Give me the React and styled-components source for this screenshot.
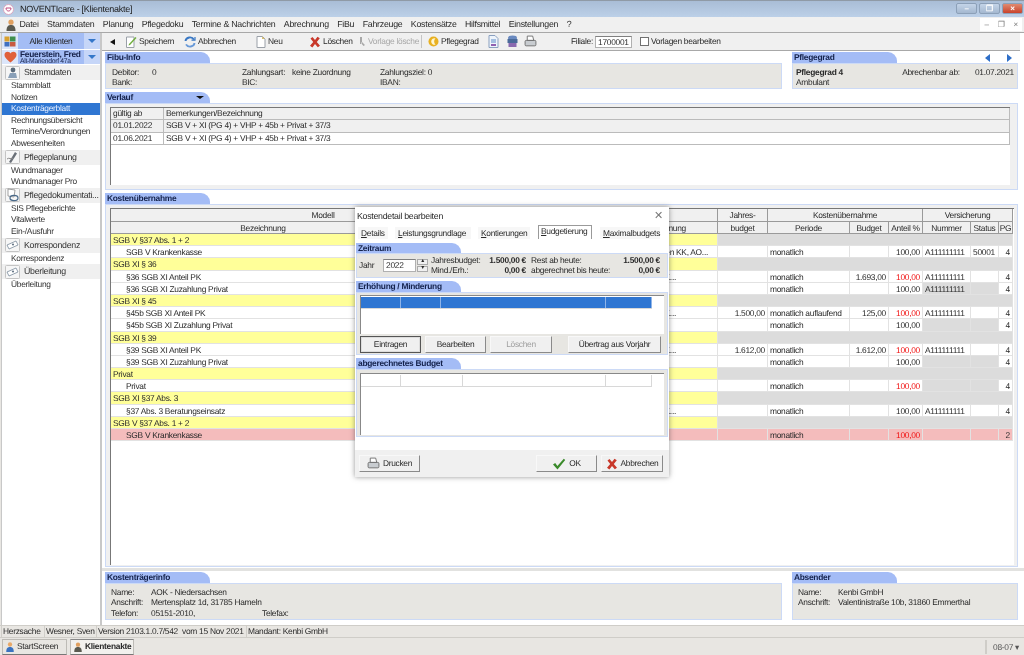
import React from "react";
import styled, { createGlobalStyle } from "styled-components";

const Global = createGlobalStyle`
  html, body { margin: 0; padding: 0; background: #e8e6e2; overflow: hidden; }
  * { box-sizing: border-box; }
`;

const Window = styled.div`
  position: relative;
  width: 1024px;
  height: 655px;
  overflow: hidden;
  display: flex;
  flex-direction: column;
  background: #e8e6e2;
  color: #2a2a2a;
  font-family: "Liberation Sans", Arial, sans-serif;
  font-size: 8.4px;
  letter-spacing: -0.28px;
  line-height: 11px;
  text-rendering: geometricPrecision;
  filter: blur(0.35px);
`;

const TitleBar = styled.div`
  height: 17px;
  flex: none;
  display: flex;
  align-items: center;
  padding-left: 3px;
  gap: 6px;
  border-top: 1px solid #8f9aa6;
  background: linear-gradient(to bottom, #a9bdd6, #bcd0e8);
  font-size: 9px;
  color: #1c1c1c;
`;

const WinButtons = styled.div`
  margin-left: auto;
  display: flex;
  gap: 2px;
  padding-right: 1px;
  align-self: flex-start;
  margin-top: 2px;
`;

const WinButton = styled.div`
  width: 21px;
  height: 11px;
  border: 1px solid #8ca0b8;
  border-radius: 2px;
  background: ${({ $close }) =>
    $close ? "linear-gradient(#e08a70, #c9432c)" : "linear-gradient(#c4d4e8, #a4b8d0)"};
  color: #fff;
  font-size: 8px;
  line-height: 9px;
  text-align: center;
  font-weight: bold;
`;

const MenuBar = styled.div`
  height: 16px;
  flex: none;
  display: flex;
  align-items: center;
  gap: 8.4px;
  padding-left: 5px;
  background: #f0f0f0;
  border-bottom: 1px solid #a8a8a8;
  font-size: 8.8px;
  letter-spacing: -0.25px;
`;

const MenuIcon = styled.div`
  display: flex;
  margin-right: -6px;
`;

const MdiButtons = styled.div`
  margin-left: auto;
  display: flex;
  background: #fff;
  gap: 9px;
  padding: 0 4px;
  height: 13px;
  align-items: center;
  color: #777;
  font-size: 8px;
  margin-right: 2px;
`;

const Body = styled.div`
  flex: 1;
  min-height: 0;
  display: flex;
  padding-left: 1px;
`;

const Sidebar = styled.div`
  width: 99px;
  flex: none;
  background: #fff;
  border-left: 1px solid #c8c8c8;
  display: flex;
  flex-direction: column;
`;

const ClientRow = styled.div`
  height: ${({ $h }) => $h}px;
  flex: none;
  display: flex;
  background: #dce6fa;
  align-items: stretch;
  margin-bottom: 1px;
`;

const ClientIcon = styled.div`
  width: 16px;
  display: flex;
  align-items: center;
  justify-content: center;
`;

const ClientName = styled.div`
  flex: 1;
  background: #a4bdf5;
  display: flex;
  align-items: center;
  justify-content: center;
  color: #222;
`;

const PatientName = styled.div`
  flex: 1;
  min-width: 0;
  background: #a4bdf5;
  padding-left: 2px;
  font-weight: bold;
  font-size: 8.4px;
  line-height: 8.5px;
  color: #16224a;
  white-space: nowrap;
  small {
    display: block;
    font-weight: normal;
    font-size: 6.8px;
    line-height: 6.5px;
  }
`;

const DropArrow = styled.div`
  width: 16px;
  flex: none;
  display: flex;
  align-items: center;
  justify-content: center;
  background: #c6d6f8;
  &::after {
    content: "";
    border-left: 4px solid transparent;
    border-right: 4px solid transparent;
    border-top: 4px solid #3477c9;
  }
`;

const NavHead = styled.div`
  height: 15px;
  flex: none;
  display: flex;
  align-items: center;
  gap: 4px;
  padding-left: 3px;
  background: #f0f0f0;
  font-size: 8.8px;
  color: #333;
  white-space: nowrap;
  svg {
    flex: none;
  }
`;

const NavItem = styled.div`
  height: 11.6px;
  flex: none;
  padding-left: 9px;
  line-height: 11.6px;
  white-space: nowrap;
  background: ${({ $active }) => ($active ? "#2f76d2" : "transparent")};
  color: ${({ $active }) => ($active ? "#e8f0ff" : "#333")};
`;

const Main = styled.div`
  flex: 1;
  min-width: 0;
  display: flex;
  flex-direction: column;
  background: #fff;
  border-left: 2px solid #c8c8c8;
`;

const Toolbar = styled.div`
  height: 18px;
  flex: none;
  display: flex;
  align-items: center;
  background: #f0f0f0;
  border-bottom: 1px solid #a8a8a8;
  padding-left: 8px;
  margin: 0 4px 1px 0;
`;

const ToolItem = styled.div`
  width: ${({ $w }) => $w}px;
  flex: none;
  display: flex;
  align-items: center;
  gap: 2px;
  color: ${({ $off }) => ($off ? "#a8a8a8" : "#2a2a2a")};
  white-space: nowrap;
`;

const Triangle = styled.div`
  border-top: 3px solid transparent;
  border-bottom: 3px solid transparent;
  border-right: 5px solid #111;
`;

const ToolSep = styled.div`
  width: 1px;
  height: 13px;
  flex: none;
  background: #c4c4c4;
  margin-right: 6px;
`;

const FieldInput = styled.div`
  width: ${({ $w }) => $w}px;
  height: ${({ $h }) => $h || 12}px;
  flex: none;
  border: 1px solid #b0b0b0;
  border-top-color: #808080;
  background: #fff;
  padding-left: 2px;
  line-height: 10px;
`;

const CheckBox = styled.div`
  width: 9px;
  height: 9px;
  margin: 0 2px 0 8px;
  flex: none;
  border: 1px solid #707070;
  background: #fff;
`;

const Content = styled.div`
  flex: 1;
  min-height: 0;
  display: flex;
  flex-direction: column;
  padding: 0 6px 0 3px;
`;

const Row = styled.div`
  display: flex;
  gap: 10px;
  flex: none;
`;

const Divider = styled.div`
  height: 3px;
  flex: none;
  margin: 1px -6px 1px -3px;
  background: #e2e2e0;
`;

const Section = styled.div`
  display: flex;
  flex-direction: column;
  flex: none;
  width: ${({ $w }) => ($w ? `${$w}px` : "auto")};
  height: ${({ $h }) => $h}px;
  margin-top: ${({ $mt }) => $mt || 0}px;
`;

const TabRow = styled.div`
  display: flex;
  justify-content: space-between;
  align-items: center;
  flex: none;
`;

const Tab = styled.div`
  width: 105px;
  height: ${({ $h }) => $h || 11}px;
  flex: none;
  display: flex;
  align-items: center;
  justify-content: space-between;
  padding: 0 6px 0 2px;
  background: #a4bcf6;
  border-top-right-radius: 9px;
  font-weight: bold;
  font-size: 8.4px;
  color: #14224c;
  white-space: nowrap;
`;

const TabArrow = styled.div`
  border-left: 4px solid transparent;
  border-right: 4px solid transparent;
  border-top: 3px solid #111;
`;

const NavArrows = styled.div`
  display: flex;
  gap: 17px;
  padding-right: 6px;
`;

const BlueArrow = styled.div`
  border-top: 4px solid transparent;
  border-bottom: 4px solid transparent;
  ${({ $left }) =>
    $left ? "border-right: 5px solid #2f6fc8;" : "border-left: 5px solid #2f6fc8;"}
`;

const Panel = styled.div`
  flex: 1;
  min-height: 0;
  border: 1px solid #ccdaf6;
  background: ${({ $plain }) => ($plain ? "#f0f0f0" : "#e7e6e2")};
  padding: ${({ $pad }) => $pad || "3px 5px"};
  display: ${({ $grid }) => ($grid ? "grid" : "block")};
  grid-template-columns: ${({ $grid }) => $grid || "none"};
`;

const Split = styled.div`
  display: flex;
  justify-content: space-between;
  line-height: 10px;
`;

const Strong = styled.div`
  font-weight: bold;
`;

const DateGroup = styled.div`
  display: flex;
  gap: 15px;
`;

const Frame = styled.div`
  height: 100%;
  background: #fff;
  border-top: 1px solid #777;
  border-left: 1px solid #777;
`;

const LogHead = styled.div`
  display: grid;
  grid-template-columns: 53px 1fr;
  height: 12px;
  background: #f0f0f0;
  border-bottom: 1px solid #bbb;
  div {
    padding-left: 2px;
    border-right: 1px solid #bbb;
  }
`;

const LogRow = styled(LogHead)`
  height: 12.5px;
  background: ${({ $dim }) => ($dim ? "#f0f0f0" : "#fff")};
`;

const GridRow = styled.div`
  display: grid;
  grid-template-columns: 305px 120px 182px 50px 82px 39px 34px 48px 28px 14px;
  height: ${({ $h }) => $h || 12.2}px;
  line-height: ${({ $h }) => $h || 12.2}px;
`;

const HeadCell = styled.div`
  grid-column: ${({ $span }) => `span ${$span || 1}`};
  background: #f0f0f0;
  border-right: 1px solid #9a9a9a;
  border-bottom: 1px solid #9a9a9a;
  text-align: center;
  white-space: nowrap;
  overflow: hidden;
  ${({ $side }) => $side && "text-align: right; padding-right: 31px;"}
`;

const Cell = styled.div`
  grid-column: ${({ $span }) => `span ${$span || 1}`};
  border-right: 1px solid #e2e2e2;
  border-bottom: 1px solid #e2e2e2;
  background: ${({ $bg }) => $bg};
  color: ${({ $red }) => ($red ? "#f01010" : "inherit")};
  text-align: ${({ $right }) => ($right ? "right" : "left")};
  padding: 0 ${({ $pr }) => $pr || 2}px 0 ${({ $pl }) => $pl || 2}px;
  white-space: nowrap;
  overflow: hidden;
`;

const Info = styled.div`
  display: grid;
  grid-template-columns: ${({ $cols }) => $cols};
  line-height: 10.3px;
  white-space: nowrap;
`;

const StatusBar = styled.div`
  height: 13px;
  flex: none;
  display: flex;
  gap: 2px;
  padding: 0 1px;
  border-top: 1px solid #cfcdc8;
  border-bottom: 1px solid #cfcdc8;
`;

const StatusCell = styled.div`
  width: ${({ $w }) => $w}px;
  flex: none;
  border-left: 1px solid #d0cec9;
  padding: 0 1px;
  line-height: 11px;
  white-space: nowrap;
`;

const TaskBar = styled.div`
  height: 17px;
  flex: none;
  display: flex;
  align-items: center;
  padding-left: 2px;
  gap: 3px;
`;

const TaskTab = styled.div`
  height: 16px;
  width: ${({ $w }) => $w}px;
  display: flex;
  align-items: center;
  gap: 2px;
  padding-left: 2px;
  background: ${({ $active }) => ($active ? "#f2f1ee" : "#e8e6e2")};
  border: 1px solid #bdbbb6;
  border-top-color: ${({ $active }) => ($active ? "#888" : "#bdbbb6")};
  border-bottom-color: #777;
  font-weight: ${({ $active }) => ($active ? "bold" : "normal")};
  white-space: nowrap;
  svg {
    flex: none;
  }
`;

const Clock = styled.div`
  margin-left: auto;
  padding-left: 6px;
  border-left: 2px solid #cfcdc8;
  color: #555;
  line-height: 14px;
  width: 39px;
  white-space: nowrap;
`;

/* dialog */
const Dialog = styled.div`
  position: absolute;
  left: 355px;
  top: 207px;
  width: 314px;
  height: 270px;
  background: #fff;
  box-shadow: 0 0 5px rgba(60, 60, 60, 0.55);
  display: flex;
  flex-direction: column;
`;

const DialogTitle = styled.div`
  height: 16px;
  flex: none;
  display: flex;
  align-items: center;
  justify-content: space-between;
  padding: 2px 6px 0 2px;
  font-size: 8.8px;
`;

const CloseX = styled.div`
  color: #777;
  font-size: 11px;
`;

const DialogTabs = styled.div`
  height: 15px;
  flex: none;
  display: flex;
  align-items: flex-end;
  padding-left: 3px;
  margin: 1px 0 4px;
`;

const DialogTab = styled.div`
  width: ${({ $w }) => $w}px;
  flex: none;
  padding: 0 2px 1px;
  height: ${({ $active }) => ($active ? 14 : 12)}px;
  border: 1px solid ${({ $active }) => ($active ? "#9a9a9a" : "transparent")};
  border-bottom: 0;
  white-space: nowrap;
  background: ${({ $active }) => ($active ? "#fff" : "#f7f7f7")};
  margin-right: ${({ $mr }) => $mr}px;
  span {
    text-decoration: underline;
  }
`;

const DialogBody = styled.div`
  flex: 1;
  padding: 0 1px;
  display: flex;
  flex-direction: column;
  gap: 3px;
`;

const BudgetGrid = styled.div`
  display: grid;
  grid-template-columns: 24px 34px 14px 50px 45px 5px 75px 54px;
  align-items: center;
  height: 100%;
  line-height: 9.5px;
  white-space: nowrap;
`;

const Spinner = styled.div`
  display: flex;
  flex-direction: column;
  gap: 1px;
  width: 11px;
  span {
    display: block;
    height: 6px;
    background: #f0f0f0;
    border: 1px solid #aaa;
    font-size: 6px;
    line-height: 3px;
    text-align: center;
  }
`;

const Stack = styled.div`
  text-align: ${({ $right }) => ($right ? "right" : "left")};
  font-weight: ${({ $bold }) => ($bold ? "bold" : "normal")};
`;

const ListBox = styled.div`
  height: ${({ $h }) => $h}px;
  background: #fff;
  border-top: 1px solid #888;
  border-left: 1px solid #888;
  padding-top: 1px;
`;

const ListHead = styled.div`
  width: 291px;
  height: 12px;
  display: grid;
  grid-template-columns: ${({ $cols }) => $cols};
  background: ${({ $blue }) => ($blue ? "#2f76d2" : "#fff")};
  border-bottom: 1px solid #d8d8d8;
  div {
    border-right: 1px solid ${({ $blue }) => ($blue ? "#8fb4e8" : "#d8d8d8")};
  }
`;

const ButtonBar = styled.div`
  display: flex;
  align-items: center;
  gap: 4px;
  margin-top: 2px;
`;

const Btn = styled.div`
  width: ${({ $w }) => $w}px;
  height: 17px;
  flex: none;
  margin-left: ${({ $ml }) => $ml || 0}px;
  display: flex;
  align-items: center;
  justify-content: center;
  gap: 3px;
  background: #f0f0f0;
  border: 1px solid #f8f8f8;
  border-right-color: #8a8a8a;
  border-bottom-color: #8a8a8a;
  color: ${({ $off }) => ($off ? "#a0a0a0" : "#2a2a2a")};
  ${({ $primary }) => $primary && "outline: 1px solid #555; outline-offset: -1px; box-shadow: inset 0 0 0 1px #ddd;"}
`;

const DialogFoot = styled.div`
  height: 27px;
  flex: none;
  display: flex;
  align-items: center;
  gap: 4px;
  padding: 0 6px 0 4px;
  background: #f0f0f0;
`;

const Push = styled.div`
  flex: 1;
`;

/* icons */
const Person = ({ s = 12 }) => (
  <svg width={s} height={s} viewBox="0 0 12 12">
    <circle cx="6" cy="3.2" r="2.6" fill="#e0a060" />
    <path d="M1.5 12 C1.5 7 3.5 6 6 6 C8.5 6 10.5 7 10.5 12Z" fill="#5a5a50" />
  </svg>
);
const BluePerson = () => (
  <svg width="10" height="12" viewBox="0 0 12 12">
    <circle cx="6" cy="3" r="2.6" fill="#e8a868" />
    <path d="M1.5 12 C1.5 7 3.5 6 6 6 C8.5 6 10.5 7 10.5 12Z" fill="#3a72c0" />
  </svg>
);
const Group = () => (
  <svg width="12" height="11" viewBox="0 0 12 11">
    <rect x="0.5" y="0.5" width="5" height="5" fill="#d8a030" />
    <rect x="6" y="0.5" width="5.5" height="5" fill="#3f8f4f" />
    <rect x="0.5" y="6" width="5" height="4.5" fill="#4070c0" />
    <rect x="6" y="6" width="5.5" height="4.5" fill="#c85a40" />
  </svg>
);
const Heart = () => (
  <svg width="13" height="12" viewBox="0 0 13 12">
    <path d="M6.5 11.5 C2 8 0.5 6 0.5 3.8 C0.5 1.8 2 0.8 3.5 0.8 C5 0.8 6 1.6 6.5 2.6 C7 1.6 8 0.8 9.5 0.8 C11 0.8 12.5 1.8 12.5 3.8 C12.5 6 11 8 6.5 11.5Z" fill="#e0603a" />
  </svg>
);
const NavPic = ({ kind }) => (
  <svg width="15" height="14" viewBox="0 0 15 14">
    <rect x="0.5" y="0.5" width="14" height="13" rx="1" fill="#f6f6f6" stroke="#c4c4c4" />
    {kind === "card" ? (
      <g>
        <path d="M2 7 L11 3 L13 7 L4 11Z" fill="#fff" stroke="#7a8a9a" strokeWidth="0.8" />
        <circle cx="8" cy="6.5" r="1.1" fill="#6a7a8a" />
      </g>
    ) : kind === "doc" ? (
      <g>
        <path d="M3 1 L10 2 L9 9 L3 8Z" fill="#fff" stroke="#8a8a8a" strokeWidth="0.8" />
        <ellipse cx="9" cy="10" rx="4" ry="2.6" fill="none" stroke="#4a6a8a" strokeWidth="1.2" />
      </g>
    ) : kind === "plan" ? (
      <g>
        <path d="M4 12 L10 2 L12 3.5 L6 13Z" fill="#6a7078" />
        <path d="M2 9 C4 7 6 10 8 8" fill="none" stroke="#8a8a8a" />
      </g>
    ) : (
      <g>
        <circle cx="8" cy="4" r="2.4" fill="#5a6a7a" />
        <path d="M3 12 L5 7 L11 7 L12 12Z" fill="#8aa0b8" />
      </g>
    )}
  </svg>
);
const PageIcon = ({ accent = "#d8c070" }) => (
  <svg width="10" height="12" viewBox="0 0 10 12">
    <path d="M1 .5 H6.5 L9 3 V11.5 H1Z" fill="#fff" stroke="#9aa0a8" />
    <path d="M6 .5 L9 3 H6Z" fill={accent} />
  </svg>
);
const SaveIcon = () => (
  <svg width="11" height="12" viewBox="0 0 11 12">
    <path d="M.5 1 H8 V11.5 H.5Z" fill="#fff" stroke="#9aa0a8" />
    <path d="M3 8 L9.5 1 L10.5 2 L4 9 L2.5 9.5Z" fill="#6fae3c" />
  </svg>
);
const RefreshIcon = () => (
  <svg width="12" height="12" viewBox="0 0 12 12" fill="none" stroke="#3a78c4" strokeWidth="1.9">
    <path d="M1.5 5 A4.5 4 0 0 1 10 3.6" />
    <path d="M10.5 7 A4.5 4 0 0 1 2 8.4" stroke="#6a9ad8" />
    <path d="M7.5 4.2 H11 V1" strokeWidth="1.2" />
  </svg>
);
const CrossIcon = ({ s = 12 }) => (
  <svg width={s} height={s} viewBox="0 0 12 12">
    <path d="M1.5 2.5 L3.5 1 L6 4 L8.5 .8 L10.8 2.3 L7.8 6 L11 9.8 L8.8 11.3 L6 8 L3.4 11.4 L1 9.8 L4.2 6Z" fill="#c8382a" />
  </svg>
);
const CheckIcon = () => (
  <svg width="14" height="12" viewBox="0 0 14 12">
    <path d="M1 6.5 L3.2 5 L5.4 8 L11.8 .8 L13.2 2 L5.5 11.5Z" fill="#3a8a2a" />
  </svg>
);
const TemplateIcon = () => (
  <svg width="7" height="11" viewBox="0 0 7 11">
    <path d="M1 1 V8 H3 V1Z M3 6 L6 9 L4.5 10 L2 7Z" fill="#a8a8a8" />
  </svg>
);
const CoinIcon = () => (
  <svg width="11" height="11" viewBox="0 0 11 11">
    <circle cx="5.5" cy="5.5" r="5" fill="#e8b020" />
    <path d="M7.5 2.5 A3.2 3.2 0 1 0 7.5 8.5 A4 4 0 0 1 7.5 2.5Z" fill="#fff6d0" />
  </svg>
);
const PrinterIcon = ({ s = 12 }) => (
  <svg width={s} height={s} viewBox="0 0 12 12">
    <path d="M3 1 H8 L9 5 H3Z" fill="#fff" stroke="#666" strokeWidth="0.8" />
    <rect x="1" y="5" width="10" height="5" rx="1" fill="#c8ccd0" stroke="#666" strokeWidth="0.8" />
  </svg>
);
const ReportIcon = () => (
  <svg width="11" height="13" viewBox="0 0 11 13">
    <path d="M1 .5 H7 L10 3.5 V12.5 H1Z" fill="#eef4fb" stroke="#8aa0c0" />
    <rect x="3" y="9" width="5" height="2" fill="#9060b0" />
    <path d="M3 5 H8 M3 7 H8" stroke="#5a8ac8" />
  </svg>
);
const StackIcon = () => (
  <svg width="13" height="13" viewBox="0 0 13 13">
    <ellipse cx="6.5" cy="3" rx="4.5" ry="2.4" fill="#6a8ac0" />
    <rect x="1.5" y="4" width="10" height="4" fill="#4a6a9a" />
    <rect x="2.5" y="8" width="8" height="4" fill="#8a6ab0" />
  </svg>
);
const AppLogo = () => (
  <svg width="11" height="11" viewBox="0 0 11 11">
    <circle cx="5.5" cy="5.5" r="5" fill="#fff" stroke="#d8a8c0" />
    <path d="M3 4 H8 C8 8 3 8 3 4Z" fill="none" stroke="#c04a80" />
  </svg>
);

const menu = ["Datei", "Stammdaten", "Planung", "Pflegedoku", "Termine & Nachrichten", "Abrechnung", "FiBu", "Fahrzeuge", "Kostensätze", "Hilfsmittel", "Einstellungen", "?"];

const nav = [
  { head: "Stammdaten", pic: "person", items: ["Stammblatt", "Notizen", "Kostenträgerblatt", "Rechnungsübersicht", "Termine/Verordnungen", "Abwesenheiten"] },
  { head: "Pflegeplanung", pic: "plan", items: ["Wundmanager", "Wundmanager Pro"] },
  { head: "Pflegedokumentati...", pic: "doc", items: ["SIS Pflegeberichte", "Vitalwerte", "Ein-/Ausfuhr"] },
  { head: "Korrespondenz", pic: "card", items: ["Korrespondenz"] },
  { head: "Überleitung", pic: "card", items: ["Überleitung"] },
];

const A = "A111111111";
const rows = [
  { group: "SGB V §37 Abs. 1 + 2" },
  { name: "SGB V Krankenkasse", note: "en KK, AO...", pad: 9, anteil: "100,00", nr: A, status: "50001", pg: "4" },
  { group: "SGB XI § 36" },
  { name: "§36 SGB XI Anteil PK", note: "K...", pad: 41, budget: "1.693,00", anteil: "100,00", red: true, nr: A, pg: "4" },
  { name: "§36 SGB XI Zuzahlung Privat", anteil: "100,00", nr: A, dimNr: true, dimSt: true, pg: "4" },
  { group: "SGB XI § 45" },
  { name: "§45b SGB XI Anteil PK", note: "K...", pad: 41, jb: "1.500,00", period: "monatlich auflaufend", budget: "125,00", anteil: "100,00", red: true, nr: A, pg: "4" },
  { name: "§45b SGB XI Zuzahlung Privat", anteil: "100,00", dimNr: true, dimSt: true, pg: "4" },
  { group: "SGB XI § 39" },
  { name: "§39 SGB XI Anteil PK", note: "K...", pad: 41, jb: "1.612,00", budget: "1.612,00", anteil: "100,00", red: true, nr: A, pg: "4" },
  { name: "§39 SGB XI Zuzahlung Privat", anteil: "100,00", dimNr: true, dimSt: true, pg: "4" },
  { group: "Privat" },
  { name: "Privat", anteil: "100,00", red: true, dimNr: true, dimSt: true, pg: "4" },
  { group: "SGB XI §37 Abs. 3" },
  { name: "§37 Abs. 3 Beratungseinsatz", note: "K...", pad: 41, anteil: "100,00", nr: A, pg: "4" },
  { group: "SGB V §37 Abs. 1 + 2" },
  { name: "SGB V Krankenkasse", anteil: "100,00", red: true, pg: "2", alert: true },
];

function CostRow({ row }) {
  if (row.group) {
    return (
      <GridRow>
        <Cell $span={3} $bg="#ffff99">{row.group}</Cell>
        <Cell $span={7} $bg="#dcdcdc" />
      </GridRow>
    );
  }
  const bg = row.alert ? "#f4bcbc" : "#fff";
  const dim = row.alert ? "#f4bcbc" : "#dcdcdc";
  return (
    <GridRow>
      <Cell $bg={bg} $pl={15}>{row.name}</Cell>
      <Cell $bg={bg} />
      <Cell $bg={bg} $right $pr={row.pad}>{row.note}</Cell>
      <Cell $bg={bg} $right>{row.jb}</Cell>
      <Cell $bg={bg}>{row.period || "monatlich"}</Cell>
      <Cell $bg={bg} $right>{row.budget}</Cell>
      <Cell $bg={bg} $right $red={row.red}>{row.anteil}</Cell>
      <Cell $bg={row.dimNr ? dim : bg}>{row.nr}</Cell>
      <Cell $bg={row.dimSt ? dim : bg} $right $pr={3}>{row.status}</Cell>
      <Cell $bg={bg} $right>{row.pg}</Cell>
    </GridRow>
  );
}

export default function App() {
  return (
    <Window>
      <Global />
      <TitleBar>
        <AppLogo />
        <span>NOVENTIcare - [Klientenakte]</span>
        <WinButtons>
          <WinButton>–</WinButton>
          <WinButton>❐</WinButton>
          <WinButton $close>×</WinButton>
        </WinButtons>
      </TitleBar>
      <MenuBar>
        <MenuIcon><Person /></MenuIcon>
        {menu.map((m) => <span key={m}>{m}</span>)}
        <MdiButtons><span>–</span><span>❐</span><span>×</span></MdiButtons>
      </MenuBar>
      <Body>
        <Sidebar>
          <ClientRow $h={16}>
            <ClientIcon><Group /></ClientIcon>
            <ClientName>Alle Klienten</ClientName>
            <DropArrow />
          </ClientRow>
          <ClientRow $h={14}>
            <ClientIcon><Heart /></ClientIcon>
            <PatientName>Feuerstein, Fred<small>Alt-Mariendorf 47a</small></PatientName>
            <DropArrow />
          </ClientRow>
          {nav.map((g) => (
            <div key={g.head}>
              <NavHead><NavPic kind={g.pic} />{g.head}</NavHead>
              {g.items.map((i) => (
                <NavItem key={i + g.head} $active={i === "Kostenträgerblatt"}>{i}</NavItem>
              ))}
            </div>
          ))}
        </Sidebar>
        <Main>
          <Toolbar>
            <ToolItem $w={16}><Triangle /></ToolItem>
            <ToolItem $w={58}><SaveIcon />Speichern</ToolItem>
            <ToolItem $w={72}><RefreshIcon />Abbrechen</ToolItem>
            <ToolItem $w={53}><PageIcon />Neu</ToolItem>
            <ToolItem $w={50}><CrossIcon />Löschen</ToolItem>
            <ToolItem $w={62} $off><TemplateIcon />Vorlage lösche</ToolItem>
            <ToolSep />
            <ToolItem $w={60}><CoinIcon />Pflegegrad</ToolItem>
            <ToolItem $w={18}><ReportIcon /></ToolItem>
            <ToolItem $w={18}><StackIcon /></ToolItem>
            <ToolItem $w={47}><PrinterIcon s={13} /></ToolItem>
            <ToolItem $w={24}>Filiale:</ToolItem>
            <FieldInput $w={37}>1700001</FieldInput>
            <CheckBox />Vorlagen bearbeiten
          </Toolbar>
          <Content>
            <Row>
              <Section $w={677} $h={37}>
                <Tab>Fibu-Info</Tab>
                <Panel $grid="130px 138px 1fr" $pad="3px 6px">
                  <Info $cols="40px 1fr">
                    <span>Debitor:</span><span>0</span>
                    <span>Bank:</span><span />
                  </Info>
                  <Info $cols="50px 1fr">
                    <span>Zahlungsart:</span><span>keine Zuordnung</span>
                    <span>BIC:</span><span />
                  </Info>
                  <Info $cols="1fr">
                    <span>Zahlungsziel: 0</span>
                    <span>IBAN:</span>
                  </Info>
                </Panel>
              </Section>
              <Section $w={226} $h={37}>
                <TabRow>
                  <Tab>Pflegegrad</Tab>
                  <NavArrows><BlueArrow $left /><BlueArrow /></NavArrows>
                </TabRow>
                <Panel $pad="3px 3px">
                  <Split>
                    <Strong>Pflegegrad 4</Strong>
                    <DateGroup><span>Abrechenbar ab:</span><span>01.07.2021</span></DateGroup>
                  </Split>
                  <Split>Ambulant</Split>
                </Panel>
              </Section>
            </Row>
            <Section $h={98} $mt={3}>
              <Tab>Verlauf<TabArrow /></Tab>
              <Panel $plain $pad="3px 7px 4px 4px">
                <Frame>
                  <LogHead><div>gültig ab</div><div>Bemerkungen/Bezeichnung</div></LogHead>
                  <LogRow $dim><div>01.01.2022</div><div>SGB V + XI (PG 4) + VHP + 45b + Privat + 37/3</div></LogRow>
                  <LogRow><div>01.06.2021</div><div>SGB V + XI (PG 4) + VHP + 45b + Privat + 37/3</div></LogRow>
                </Frame>
              </Panel>
            </Section>
            <Section $h={374} $mt={3}>
              <Tab>Kostenübernahme</Tab>
              <Panel $plain $pad="3px 3px 1px 4px">
                <Frame>
                  <GridRow $h={13}>
                    <HeadCell $span={2}>Modell</HeadCell>
                    <HeadCell />
                    <HeadCell>Jahres-</HeadCell>
                    <HeadCell $span={3}>Kostenübernahme</HeadCell>
                    <HeadCell $span={3}>Versicherung</HeadCell>
                  </GridRow>
                  <GridRow $h={12}>
                    <HeadCell>Bezeichnung</HeadCell>
                    <HeadCell />
                    <HeadCell $side>Bezeichnung</HeadCell>
                    <HeadCell>budget</HeadCell>
                    <HeadCell>Periode</HeadCell>
                    <HeadCell>Budget</HeadCell>
                    <HeadCell>Anteil %</HeadCell>
                    <HeadCell>Nummer</HeadCell>
                    <HeadCell>Status</HeadCell>
                    <HeadCell>PG</HeadCell>
                  </GridRow>
                  {rows.map((r, i) => <CostRow key={i} row={r} />)}
                </Frame>
              </Panel>
            </Section>
            <Divider />
            <Row>
              <Section $w={677} $h={48}>
                <Tab>Kostenträgerinfo</Tab>
                <Panel>
                  <Info $cols="40px 111px 1fr">
                    <span>Name:</span><span>AOK - Niedersachsen</span><span />
                    <span>Anschrift:</span><span>Mertensplatz 1d, 31785 Hameln</span><span />
                    <span>Telefon:</span><span>05151-2010,</span><span>Telefax:</span>
                  </Info>
                </Panel>
              </Section>
              <Section $w={226} $h={48}>
                <Tab>Absender</Tab>
                <Panel>
                  <Info $cols="40px 1fr">
                    <span>Name:</span><span>Kenbi GmbH</span>
                    <span>Anschrift:</span><span>Valentinistraße 10b, 31860 Emmerthal</span>
                  </Info>
                </Panel>
              </Section>
            </Row>
          </Content>
        </Main>
      </Body>
      <StatusBar>
        <StatusCell $w={41}>Herzsache</StatusCell>
        <StatusCell $w={50}>Wesner, Sven</StatusCell>
        <StatusCell $w={148}>Version 2103.1.0.7/542 &nbsp;vom 15 Nov 2021</StatusCell>
        <StatusCell $w={90}>Mandant: Kenbi GmbH</StatusCell>
      </StatusBar>
      <TaskBar>
        <TaskTab $w={65}><BluePerson />StartScreen</TaskTab>
        <TaskTab $w={64} $active><Person s={10} />Klientenakte</TaskTab>
        <Clock>08-07 ▾</Clock>
      </TaskBar>

      <Dialog>
        <DialogTitle>Kostendetail bearbeiten<CloseX>✕</CloseX></DialogTitle>
        <DialogTabs>
          <DialogTab $w={30} $mr={7}><span>D</span>etails</DialogTab>
          <DialogTab $w={76} $mr={7}><span>L</span>eistungsgrundlage</DialogTab>
          <DialogTab $w={52} $mr={8}><span>K</span>ontierungen</DialogTab>
          <DialogTab $w={54} $mr={8} $active><span>B</span>udgetierung</DialogTab>
          <DialogTab $w={60} $mr={0}><span>M</span>aximalbudgets</DialogTab>
        </DialogTabs>
        <DialogBody>
          <Section $h={35}>
            <Tab $h={10}>Zeitraum</Tab>
            <Panel $pad="1px 2px">
              <BudgetGrid>
                <span>Jahr</span>
                <FieldInput $w={33} $h={13}>2022</FieldInput>
                <Spinner><span>▴</span><span>▾</span></Spinner>
                <Stack>Jahresbudget:<br />Mind./Erh.:</Stack>
                <Stack $right $bold>1.500,00 €<br />0,00 €</Stack>
                <span />
                <Stack>Rest ab heute:<br />abgerechnet bis heute:</Stack>
                <Stack $right $bold>1.500,00 €<br />0,00 €</Stack>
              </BudgetGrid>
            </Panel>
          </Section>
          <Section $h={74}>
            <Tab>Erhöhung / Minderung</Tab>
            <Panel $pad="2px 3px">
              <ListBox $h={39}>
                <ListHead $blue $cols="40px 40px 165px 46px"><div /><div /><div /><div /></ListHead>
              </ListBox>
              <ButtonBar>
                <Btn $w={61} $primary>Eintragen</Btn>
                <Btn $w={61}>Bearbeiten</Btn>
                <Btn $w={62} $off>Löschen</Btn>
                <Btn $w={93} $ml={12}>Übertrag aus Vorjahr</Btn>
              </ButtonBar>
            </Panel>
          </Section>
          <Section $h={79}>
            <Tab>abgerechnetes Budget</Tab>
            <Panel $pad="3px 3px">
              <ListBox $h={62}>
                <ListHead $cols="40px 62px 143px 46px"><div /><div /><div /><div /></ListHead>
              </ListBox>
            </Panel>
          </Section>
        </DialogBody>
        <DialogFoot>
          <Btn $w={61}><PrinterIcon s={13} />Drucken</Btn>
          <Push />
          <Btn $w={61}><CheckIcon />OK</Btn>
          <Btn $w={62}><CrossIcon />Abbrechen</Btn>
        </DialogFoot>
      </Dialog>
    </Window>
  );
}
